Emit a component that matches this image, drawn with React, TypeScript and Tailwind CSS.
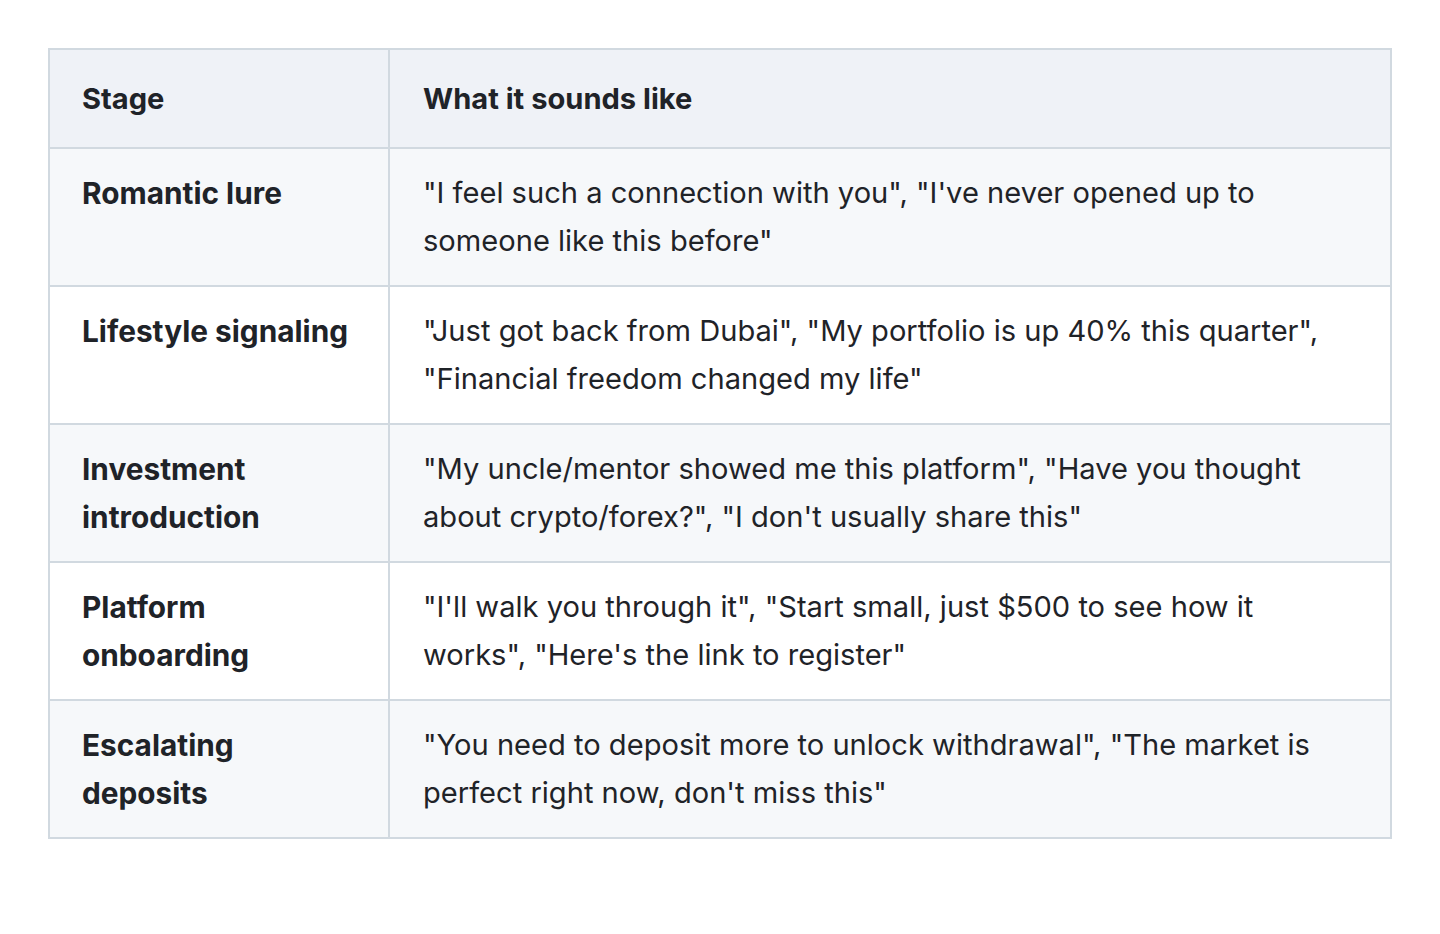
const rows = [
  {
    stage: "Romantic lure",
    quote: `"I feel such a connection with you", "I've never opened up to someone like this before"`,
  },
  {
    stage: "Lifestyle signaling",
    quote: `"Just got back from Dubai", "My portfolio is up 40% this quarter", "Financial freedom changed my life"`,
  },
  {
    stage: "Investment introduction",
    quote: `"My uncle/mentor showed me this platform", "Have you thought about crypto/forex?", "I don't usually share this"`,
  },
  {
    stage: "Platform onboarding",
    quote: `"I'll walk you through it", "Start small, just $500 to see how it works", "Here's the link to register"`,
  },
  {
    stage: "Escalating deposits",
    quote: `"You need to deposit more to unlock withdrawal", "The market is perfect right now, don't miss this"`,
  },
];

export default function App() {
  return (
    <div className="min-h-screen bg-white p-12 font-['Inter','Liberation_Sans',sans-serif] text-[29.1px] leading-[48px] text-[#1f2328]">
      <table className="w-full border-collapse border-2 border-[#d1d9e0]">
        <thead>
          <tr className="bg-[#eff2f7] text-left">
            <th className="w-[340px] border-2 border-[#d1d9e0] px-8 py-[24.5px] font-bold">
              Stage
            </th>
            <th className="border-2 border-[#d1d9e0] pl-[33px] pr-8 py-[24.5px] font-bold">
              What it sounds like
            </th>
          </tr>
        </thead>
        <tbody>
          {rows.map((r, i) => (
            <tr key={r.stage} className={i % 2 === 0 ? "bg-[#f6f8fa]" : "bg-white"}>
              <td className="border-2 border-[#d1d9e0] px-8 py-5 align-top text-[29.8px] font-bold">
                {r.stage}
              </td>
              <td className="border-2 border-[#d1d9e0] pl-[33px] pr-8 py-5 align-top">
                {r.quote}
              </td>
            </tr>
          ))}
        </tbody>
      </table>
    </div>
  );
}
